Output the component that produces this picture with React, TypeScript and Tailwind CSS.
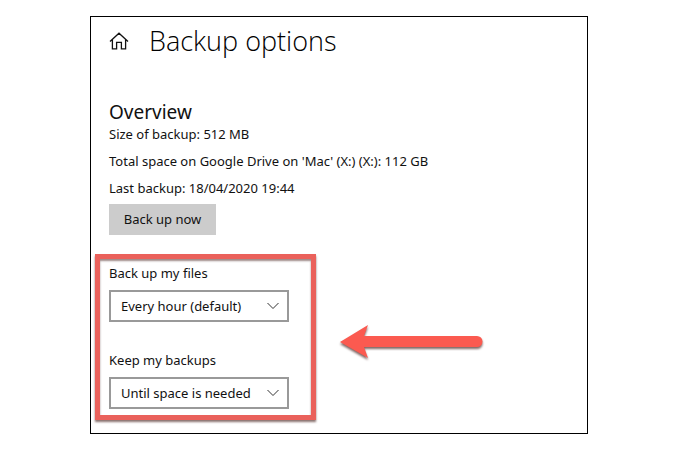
import { useId } from 'react';

interface SelectFieldProps {
    label: string;
    options: string[];
}

function HomeIcon() {
    return (
        <svg viewBox="0 0 20 20" className="h-5 w-5 shrink-0" fill="none" stroke="currentColor" strokeWidth="1.3" aria-hidden="true">
            <path d="M1 10.6 10 2.2l9 8.4M3.4 8.6v9.2h4.2v-6.4h4.8v6.4h4.2V8.6" />
        </svg>
    );
}

function SelectField({ label, options }: SelectFieldProps) {
    const id = useId();

    return (
        <div className="flex flex-col gap-[7px]">
            <label htmlFor={id} className="leading-5">
                {label}
            </label>
            <div className="grid w-[180px] items-center">
                <select
                    id={id}
                    className="col-start-1 row-start-1 h-8 w-full appearance-none border-2 border-[#999] bg-white pr-7 pl-[10px] leading-5"
                >
                    {options.map((option) => (
                        <option key={option}>{option}</option>
                    ))}
                </select>
                <svg
                    viewBox="0 0 12 8"
                    className="pointer-events-none col-start-1 row-start-1 mr-[10px] h-2 w-3 justify-self-end"
                    fill="none"
                    stroke="#333"
                    aria-hidden="true"
                >
                    <path d="m.5 1 5.5 5.5L11.5 1" />
                </svg>
            </div>
        </div>
    );
}

function Arrow() {
    return (
        <svg
            viewBox="0 0 145 38"
            className="mt-3 h-[38px] w-[145px] shrink-0 overflow-visible drop-shadow-[0_2px_1px_rgba(60,20,15,0.65)]"
            fill="#fb5a50"
            aria-hidden="true"
        >
            <path d="M0 18 28 1l-4 11h113a5.5 5.5 0 0 1 0 11H24l4 11z" />
        </svg>
    );
}

export default function App() {
    return (
        <div className="bg-white py-4 pr-28 pl-[90px] font-['Noto_Sans','Open_Sans',sans-serif] text-[13px] text-[#111]">
            <main className="border border-black pb-[13px]">
                <header className="flex h-12 items-center gap-5 pl-[18px]">
                    <HomeIcon />
                    <h1 className="font-['Open_Sans','Noto_Sans',sans-serif] text-[27px] leading-9 font-light text-black">
                        Backup options
                    </h1>
                </header>

                <section className="mt-[35px] pl-[18px]">
                    <h2 className="text-[19px] leading-6">Overview</h2>
                    <div className="flex flex-col gap-[7px] leading-5">
                        <p>Size of backup: 512 MB</p>
                        <p>Total space on Google Drive on 'Mac' (X:) (X:): 112 GB</p>
                        <p>Last backup: 18/04/2020 19:44</p>
                    </div>
                    <button type="button" className="mt-[6px] h-[31px] w-[107px] bg-[#ccc]">
                        Back up now
                    </button>
                </section>

                <div className="mt-[19px] flex items-center gap-6 pl-1">
                    <section className="flex w-[221px] shrink-0 flex-col gap-7 border-5 border-[#ea615b] pt-1 pb-[6px] pl-[9px] shadow-[0_2px_2px_rgba(60,20,15,0.6),inset_0_2px_2px_rgba(60,20,15,0.5)]">
                        <SelectField label="Back up my files" options={['Every hour (default)', 'Daily']} />
                        <SelectField label="Keep my backups" options={['Until space is needed', 'Forever']} />
                    </section>
                    <Arrow />
                </div>
            </main>
        </div>
    );
}
